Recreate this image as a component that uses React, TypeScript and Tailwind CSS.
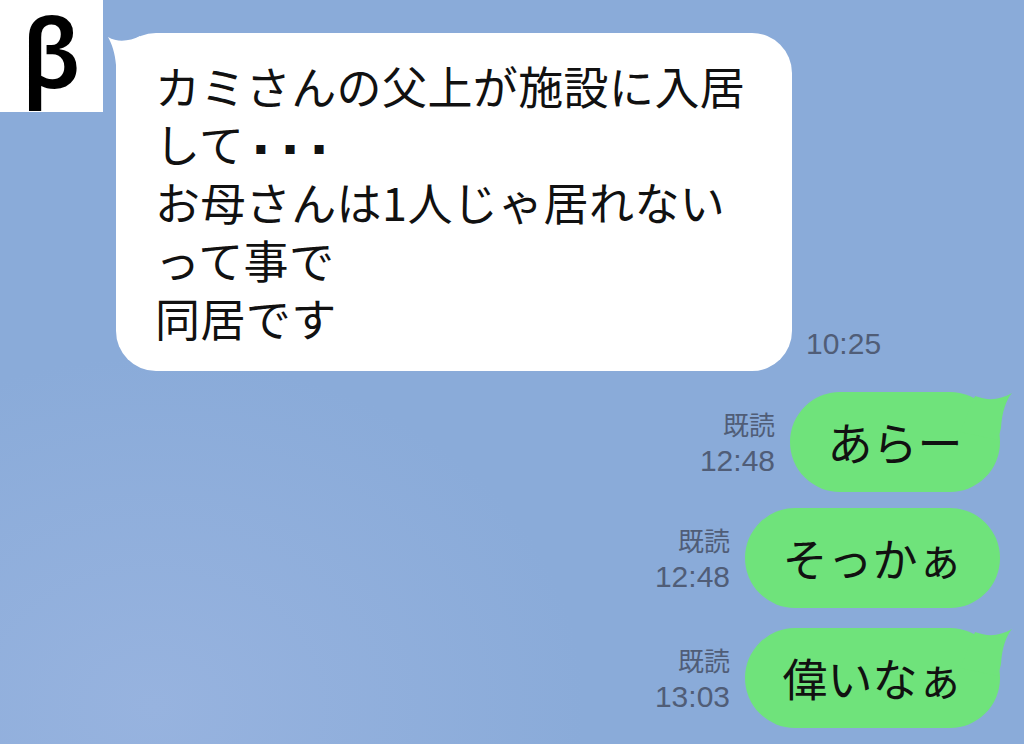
import React from "react";

const jp = { fontFamily: '"Noto Sans CJK JP", "Noto Sans", sans-serif' };
const meta = { fontFamily: '"Liberation Sans", "Noto Sans CJK JP", sans-serif' };

function LeftTail() {
  return (
    <svg className="absolute left-[-8px] top-[2px]" width="44" height="44" viewBox="0 0 44 44">
      <path d="M0,2 C10,8 22,6 32,1 L42,42 L8,42 L8,30 C7,18 4,9 0,2 Z" fill="#ffffff" />
    </svg>
  );
}

function RightTail() {
  return (
    <svg className="absolute right-[-14px] top-0" width="54" height="50" viewBox="0 0 54 50">
      <path d="M52,1 C40,8 28,9 15,4 L0,40 L38,48 L41,36 C42,20 46,8 52,1 Z" fill="#6fe37b" />
    </svg>
  );
}

function Sent({ text, time, tail, w }: { text: string; time: string; tail?: boolean; w: string }) {
  return (
    <div className="flex items-end justify-end gap-[15px] pr-[24px]">
      <div className="mb-[13px] flex flex-col items-end text-[#505d77]" style={meta}>
        <span className="text-[26px] leading-[34px]">既読</span>
        <span className="text-[30px] leading-[36px]">{time}</span>
      </div>
      <div className={`relative flex h-[100px] items-center justify-center rounded-[50px] bg-[#6fe37b] ${w}`}>
        {tail && <RightTail />}
        <span className="relative text-[45px] leading-[58px] text-[#111]" style={jp}>
          {text}
        </span>
      </div>
    </div>
  );
}

export default function App() {
  return (
    <div className="relative h-[744px] w-[1024px] overflow-hidden bg-[#8aabd9] bg-[radial-gradient(ellipse_at_15%_95%,#97b3df_0%,#8aabd9_35%)]">
      <div className="flex flex-col">
        <div className="flex items-start">
          <div className="flex h-[112px] w-[103px] items-start justify-center bg-white">
            <span
              className="mt-[1px] text-[96px] leading-[100px] text-black"
              style={{ fontFamily: '"Noto Sans", sans-serif', fontWeight: 600 }}
            >
              β
            </span>
          </div>
          <div className="mt-[33px] ml-[13px] flex items-end gap-[14px]">
            <div className="relative w-[676px] rounded-[40px] bg-white pl-[39px] pr-[10px] pt-[24px] pb-[24px]">
              <LeftTail />
              <div className="relative text-[45px] leading-[58px] tracking-[0.4px] text-[#111]" style={jp}>
                <div>カミさんの父上が施設に入居</div>
                <div className="h-[58px]">
                  して
                  <span
                    className="ml-[10px] inline-block align-[9px] text-[18px] leading-none tracking-[17px]"
                    style={{ fontFamily: '"DejaVu Sans", sans-serif' }}
                  >
                    ▪▪▪
                  </span>
                </div>
                <div>お母さんは1人じゃ居れない</div>
                <div>って事で</div>
                <div>同居です</div>
              </div>
            </div>
            <span className="mb-[9px] text-[30px] leading-[36px] text-[#505d77]" style={meta}>
              10:25
            </span>
          </div>
        </div>

        <div className="mt-[21px] flex flex-col gap-[16px]">
          <Sent text="あらー" time="12:48" tail w="w-[210px]" />
          <Sent text="そっかぁ" time="12:48" w="w-[255px]" />
          <div className="mt-[4px]">
            <Sent text="偉いなぁ" time="13:03" tail w="w-[255px]" />
          </div>
        </div>
      </div>
    </div>
  );
}
